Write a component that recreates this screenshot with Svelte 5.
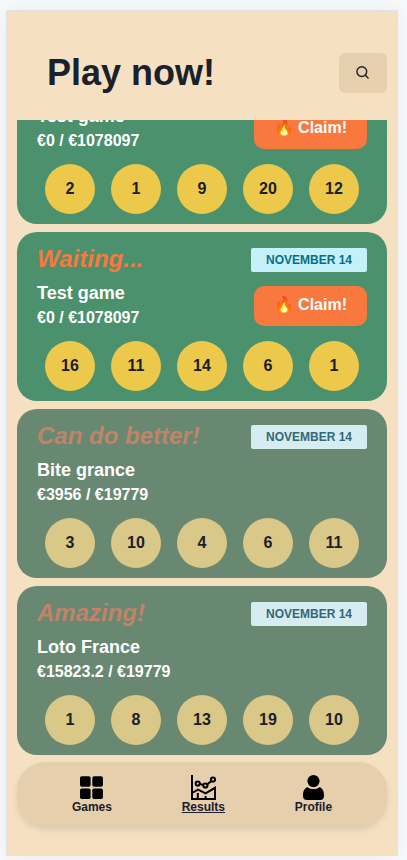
<script>
  import { onMount } from 'svelte';

  const results = [
    { status: 'Waiting...', game: 'Test game', won: '0', pot: '1078097', date: 'November 14', balls: [2, 1, 9, 20, 12], open: true },
    { status: 'Waiting...', game: 'Test game', won: '0', pot: '1078097', date: 'November 14', balls: [16, 11, 14, 6, 1], open: true },
    { status: 'Can do better!', game: 'Bite grance', won: '3956', pot: '19779', date: 'November 14', balls: [3, 10, 4, 6, 11], open: false },
    { status: 'Amazing!', game: 'Loto France', won: '15823.2', pot: '19779', date: 'November 14', balls: [1, 8, 13, 19, 10], open: false }
  ];

  let list;

  // Newest results sit at the end of the list.
  onMount(() => {
    list.scrollTop = list.scrollHeight;
  });
</script>

<div class="page">
  <main class="phone">
    <header>
      <h1>Play now!</h1>
      <button class="search" type="button" aria-label="Search">
        <svg width="14" height="14" viewBox="0 0 14 14" fill="none" stroke="currentColor" stroke-width="1.4" stroke-linecap="round">
          <circle cx="5.8" cy="5.6" r="4.9" />
          <path d="M9.4 9.2 12.1 11.9" />
        </svg>
      </button>
    </header>

    <section class="results" bind:this={list}>
      {#each results as result}
        <article class="card" class:closed={!result.open}>
          <div class="top">
            <h2>{result.status}</h2>
            <span class="date">{result.date}</span>
          </div>
          <div class="info">
            <div class="text">
              <p class="game">{result.game}</p>
              <p class="sum">€{result.won} / €{result.pot}</p>
            </div>
            {#if result.open}
              <button class="claim" type="button">🔥 Claim!</button>
            {/if}
          </div>
          <div class="balls">
            {#each result.balls as ball}
              <span class="ball">{ball}</span>
            {/each}
          </div>
        </article>
      {/each}
    </section>

    <nav>
      <a href="#games">
        <svg width="25" height="25" viewBox="0 0 25 25">
          <rect x="1" y="1.2" width="10.6" height="10.6" rx="1.8" />
          <rect x="13.3" y="1.2" width="10.6" height="10.6" rx="1.8" />
          <rect x="1" y="13.5" width="10.6" height="10.6" rx="1.8" />
          <rect x="13.3" y="13.5" width="10.6" height="10.6" rx="1.8" />
        </svg>
        <span>Games</span>
      </a>
      <a href="#results" class="active">
        <svg width="25" height="25" viewBox="0 0 25 25" fill="none" stroke="#000" stroke-width="2">
          <path d="M1 0V24H24V12.8L14.6 18.4 7 14.6 1 18" />
          <path d="M6.8 18V24M14.6 21V24" />
          <path d="M8.7 8.9 12.3 10M16.4 9.2 20.3 5.9" />
          <circle cx="6.7" cy="8.6" r="2.1" />
          <circle cx="14.4" cy="10.5" r="2.1" />
          <circle cx="22" cy="4.6" r="2.1" />
        </svg>
        <span>Results</span>
      </a>
      <a href="#profile">
        <svg width="25" height="25" viewBox="0 0 25 25">
          <circle cx="12.5" cy="6.1" r="6.1" />
          <path d="M6.6 12.2C8.2 13.4 10.2 14.1 12.5 14.1S16.8 13.4 18.4 12.2C21.4 12.8 23 16 23 20.2C23 23.5 21.8 25 19 25H6C3.2 25 2 23.5 2 20.2C2 16 3.6 12.8 6.6 12.2Z" />
        </svg>
        <span>Profile</span>
      </a>
    </nav>
  </main>
</div>

<style>
  :global(body) {
    margin: 0;
    background: #f8f9fa;
  }

  .page {
    box-sizing: border-box;
    height: 100vh;
    padding: 10px 9px 4px 6px;
    overflow: hidden;
    color: #1a202c;
    font-family: 'Liberation Sans', Arial, sans-serif;
  }

  .phone {
    box-sizing: border-box;
    display: flex;
    flex-direction: column;
    height: 100%;
    padding: 0 10px 29px;
    border: 1px solid #dee2e6;
    background: #f5e1c2;
    box-shadow: 0 0 20px rgba(0, 0, 0, 0.06);
  }

  h1,
  h2,
  p {
    margin: 0;
  }

  button {
    border: 0;
    font: inherit;
    cursor: pointer;
  }

  header {
    display: flex;
    flex: none;
    align-items: center;
    justify-content: space-between;
    padding: 42px 0 27px 30px;
  }

  h1 {
    font-size: 36px;
    line-height: 40px;
  }

  .search {
    display: flex;
    align-items: center;
    justify-content: center;
    width: 48px;
    height: 40px;
    padding: 0;
    border-radius: 6px;
    background: #e5cfad;
    color: #1a202c;
  }

  .results {
    display: flex;
    flex: 1;
    flex-direction: column;
    gap: 8px;
    min-height: 0;
    overflow-y: auto;
    scrollbar-width: none;
  }

  .card {
    flex: none;
    padding: 16px 20px 10px;
    border-radius: 20px;
    background: #4b916d;
    color: #fff;
    font-weight: 700;
  }

  .top {
    display: flex;
    align-items: flex-start;
    justify-content: space-between;
  }

  h2 {
    color: #f9783e;
    font-size: 24px;
    font-style: italic;
    line-height: 22px;
  }

  .date {
    padding: 0 15px;
    border-radius: 2px;
    background: #c4f1f9;
    color: #086f83;
    font-size: 12px;
    line-height: 24px;
    text-transform: uppercase;
  }

  .info {
    display: flex;
    align-items: flex-end;
    justify-content: space-between;
    margin-bottom: 11px;
  }

  .text {
    display: flex;
    flex-direction: column;
    gap: 1px;
    padding-top: 9px;
  }

  .game {
    font-size: 18px;
    line-height: 24px;
  }

  .sum {
    font-size: 16px;
    line-height: 24px;
  }

  .claim {
    height: 40px;
    margin-bottom: 4px;
    padding: 0 20px 2px;
    border-radius: 10px;
    background: #f9783e;
    color: #fff;
    font-size: 16px;
    line-height: 24px;
  }

  .balls {
    display: flex;
    justify-content: space-around;
  }

  .ball {
    width: 50px;
    border-radius: 50%;
    background: #ecc94b;
    color: #1a202c;
    font-size: 16px;
    line-height: 50px;
    text-align: center;
  }

  .closed {
    background: #688872;
  }

  .closed h2 {
    color: #c08468;
  }

  .closed .date {
    background: #d5ecf1;
    color: #336874;
  }

  .closed .ball {
    background: #dac888;
  }

  nav {
    display: flex;
    flex: none;
    align-items: center;
    justify-content: space-around;
    height: 64px;
    margin-top: 7px;
    padding: 0 20px;
    border-radius: 28px;
    background: #e5cfad;
    box-shadow: 0 4px 6px rgba(0, 0, 0, 0.1);
    box-sizing: border-box;
  }

  nav a {
    display: flex;
    flex-direction: column;
    align-items: center;
    color: #1a202c;
    font-size: 12px;
    font-weight: 700;
    line-height: 14px;
    text-decoration: none;
  }

  nav .active {
    text-decoration: underline;
  }
</style>
